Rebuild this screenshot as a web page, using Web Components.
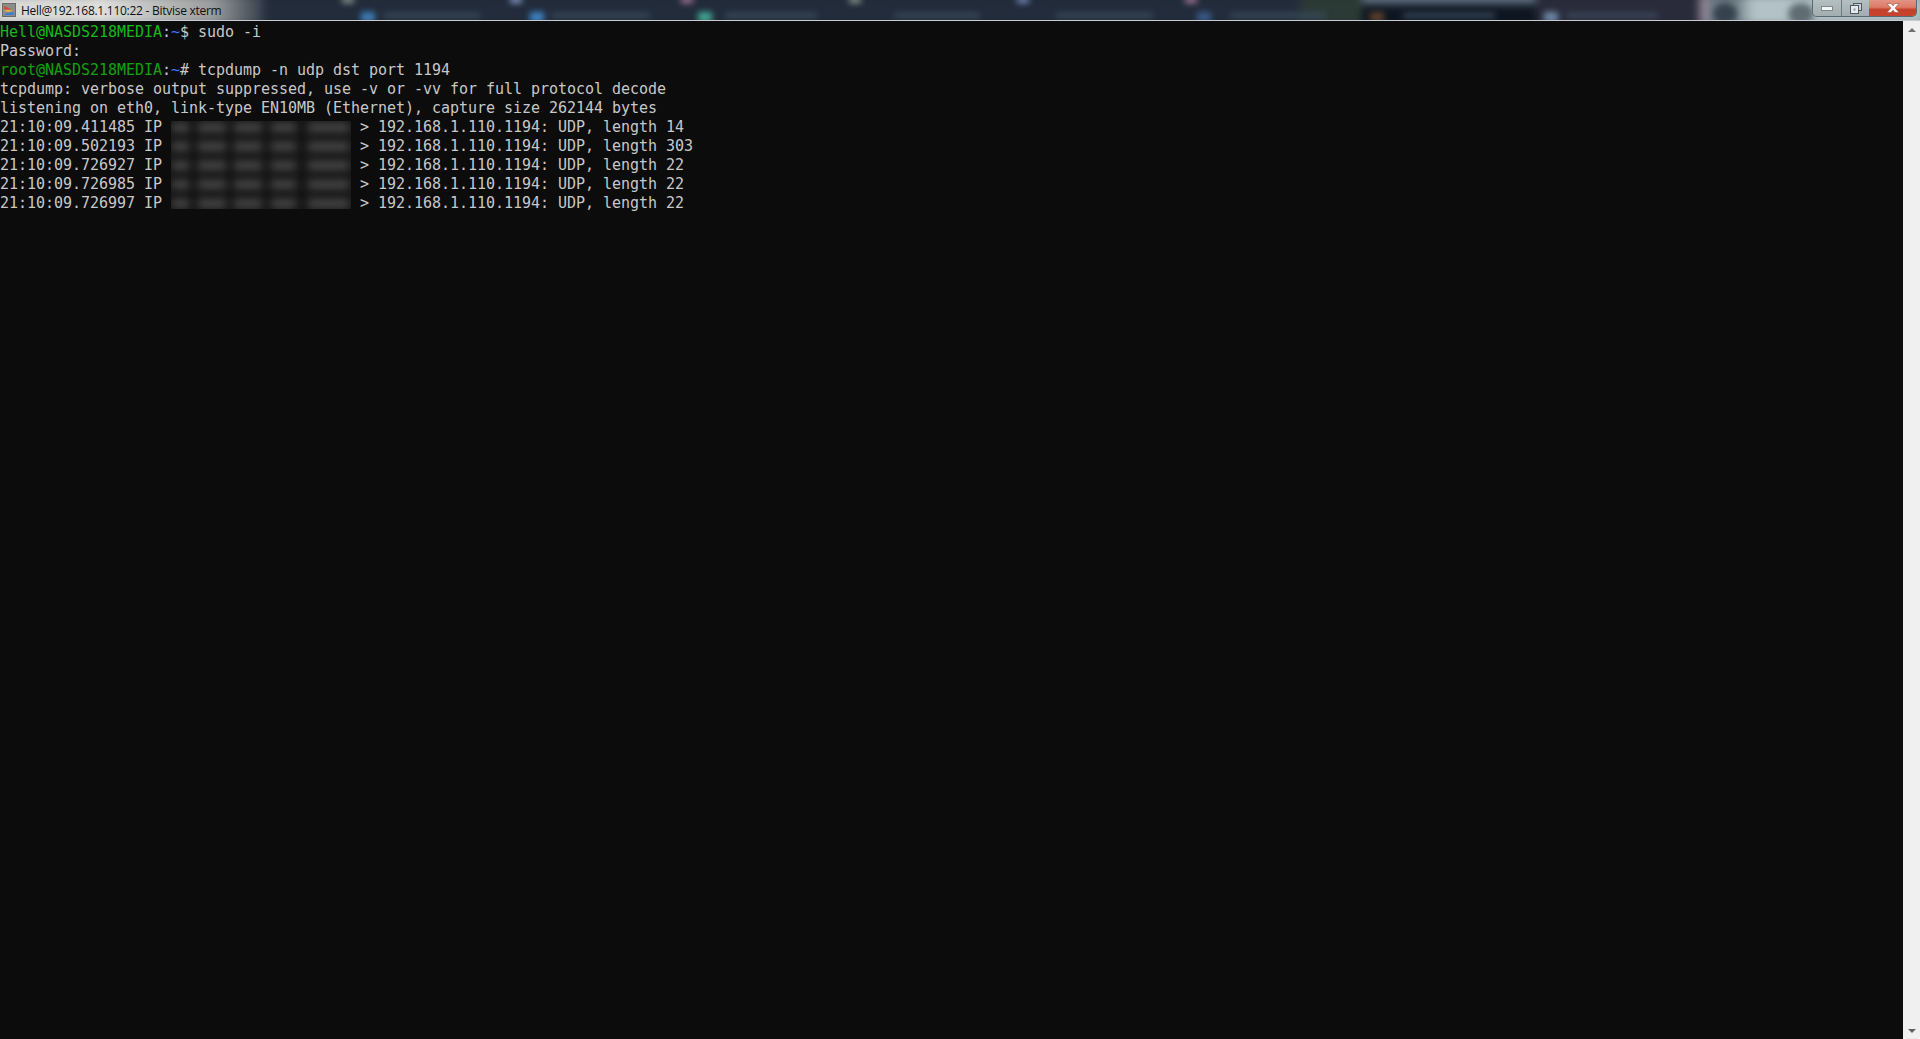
<!DOCTYPE html>
<html>
<head>
<meta charset="utf-8">
<title>Bitvise xterm</title>
<style>
    html, body { margin: 0; height: 100%; background: #0c0c0c; overflow: hidden; }
    body { display: flex; flex-direction: column; }
</style>
</head>
<body>
<xterm-window>
    <term-line><c-user>Hell@NASDS218MEDIA</c-user><c-plain>:</c-plain><c-path>~</c-path><c-plain>$ sudo -i</c-plain></term-line>
    <term-line>Password:</term-line>
    <term-line><c-root>root@NASDS218MEDIA</c-root><c-plain>:</c-plain><c-path>~</c-path><c-plain># tcpdump -n udp dst port 1194</c-plain></term-line>
    <term-line>tcpdump: verbose output suppressed, use -v or -vv for full protocol decode</term-line>
    <term-line>listening on eth0, link-type EN10MB (Ethernet), capture size 262144 bytes</term-line>
    <packet-block>
        <term-line>21:10:09.411485 IP <ip-gap></ip-gap> &gt; 192.168.1.110.1194: UDP, length 14</term-line>
        <term-line>21:10:09.502193 IP <ip-gap></ip-gap> &gt; 192.168.1.110.1194: UDP, length 303</term-line>
        <term-line>21:10:09.726927 IP <ip-gap></ip-gap> &gt; 192.168.1.110.1194: UDP, length 22</term-line>
        <term-line>21:10:09.726985 IP <ip-gap></ip-gap> &gt; 192.168.1.110.1194: UDP, length 22</term-line>
        <term-line>21:10:09.726997 IP <ip-gap></ip-gap> &gt; 192.168.1.110.1194: UDP, length 22</term-line>
    </packet-block>
</xterm-window>

<script>
    class XtermWindow extends HTMLElement {
        constructor() {
            super();
            this.attachShadow({ mode: 'open' });
            this.shadowRoot.innerHTML = `
            <style>
                :host { display: flex; flex-direction: column; flex: 1; min-height: 0; }
                .body { flex: 1; display: flex; min-height: 0; }
                .screen { flex: 1; background: #0c0c0c; color: #c8c8c8; padding-top: 2px; font-family: 'DejaVu Sans Mono', monospace; font-size: 15px; letter-spacing: -0.03px; line-height: 19px; }
            </style>
            <title-bar></title-bar>
            <div class="body">
                <div class="screen"><slot></slot></div>
                <scroll-bar></scroll-bar>
            </div>`;
        }
    }

    // the blurred desktop behind the glass title bar: [left, width, colour] in px
    const TAB_ICONS = [[368, '#3f7fb8'], [537, '#3f86c8'], [705, '#43a890'], [1204, '#3a5a88'], [1377, '#5d3f2c'], [1551, '#6f8ba8']];
    const TAB_LABELS = [[384, 96], [552, 98], [725, 92], [894, 86], [1056, 97], [1230, 96], [1403, 92], [1566, 92]];
    const TOP_GLOWS = [[348, '#8a9a8c'], [516, '#8a9ac8'], [687, '#a87a9a'], [855, '#8a9a8c'], [1023, '#7a8ac0'], [1191, '#a87a9a']];

    class TitleBar extends HTMLElement {
        constructor() {
            super();
            this.attachShadow({ mode: 'open' });
            const icons = TAB_ICONS.map(([x, c]) => `<div class="spot" style="left:${x - 7}px;top:12px;width:14px;height:10px;background:${c}"></div>`).join('');
            const labels = TAB_LABELS.map(([x, w]) => `<div class="spot" style="left:${x}px;top:13px;width:${w}px;height:5px;background:#3a4a5c"></div>`).join('');
            const glows = TOP_GLOWS.map(([x, c]) => `<div class="spot" style="left:${x - 6}px;top:-3px;width:12px;height:6px;background:${c}"></div>`).join('');
            this.shadowRoot.innerHTML = `
            <style>
                :host { display: flex; height: 20px; flex: none; position: relative; overflow: hidden; border-bottom: 1px solid #c6ccd2; background: #1d2733; }
                .glass { position: absolute; inset: -6px; filter: blur(4px); display: flex; }
                .seg { height: 100%; }
                .spot { position: absolute; }
                .caption { position: relative; display: flex; align-items: center; gap: 5px; padding-left: 2px; height: 100%; }
                .text { font: 12px/20px 'Open Sans', sans-serif; letter-spacing: -0.27px; color: #111; white-space: nowrap; position: relative; top: 1px; }
                svg { display: block; }
                .buttons { position: absolute; top: 0; right: 3px; height: 17px; display: flex; border: 1px solid #5b6870; border-top: none; border-radius: 0 0 5px 5px; overflow: hidden; box-sizing: border-box; }
                .btn { display: flex; align-items: center; justify-content: center; border-left: 1px solid #6d7a82; background: linear-gradient(#b4bfc1, #a2adb0); }
                .btn:first-child { border-left: none; }
                .close { border-left: none; background: linear-gradient(#e39384 0%, #dd7a68 45%, #c4402a 60%, #c9442e 100%); }
            </style>
            <div class="glass">
                <div class="seg" style="width:100px;background:#d9d9d6"></div>
                <div class="seg" style="width:170px;background:linear-gradient(90deg,#e2e3e0,#9a9c9d 70%,#343e4a)"></div>
                <div class="seg" style="width:1036px;background:#222c3b"></div>
                <div class="seg" style="width:62px;background:#2c3a36"></div>
                <div class="seg" style="width:174px;background:linear-gradient(#75859a 0 18%,#0d1620 38%)"></div>
                <div class="seg" style="width:163px;background:#2a2b3a"></div>
                <div class="seg" style="width:10px;background:#8d8494"></div>
                <div class="seg" style="flex:1;background:linear-gradient(90deg,#6e7c84 0,#6e7c84 26px,#b2c2c6 44px)"></div>
            </div>
            <div class="glass" style="inset:0;filter:blur(3px)">
                ${icons}${labels}${glows}
                <div class="spot" style="left:1713px;top:3px;width:24px;height:22px;border-radius:50%;background:#36424e"></div>
                <div class="spot" style="left:1788px;top:3px;width:26px;height:22px;border-radius:50%;background:#5f6c72"></div>
            </div>
            <div class="caption">
                <svg width="14" height="14" viewBox="0 0 14 14">
                    <rect x="0.5" y="0.5" width="13" height="13" fill="#8c8c8c" stroke="#6a6a6a"/>
                    <path d="M2 3 L10 6.5 L2 6.5 Z" fill="#d9482e"/>
                    <path d="M2 7 L11 7 L6 9.5 Z" fill="#e8b23a"/>
                    <path d="M2 12 L12 12 L12 9.5 L5 9.5 Z" fill="#3f7fd0"/>
                </svg>
                <span class="text">Hell@192.168.1.110:22 - Bitvise xterm</span>
            </div>
            <div class="buttons">
                <div class="btn" style="width:28px">
                    <svg width="12" height="5" viewBox="0 0 12 5"><rect x="0.5" y="0.5" width="11" height="4" fill="#f1f4f4" stroke="#7d878c"/></svg>
                </div>
                <div class="btn" style="width:27px">
                    <svg width="12" height="11" viewBox="0 0 12 11"><rect x="3.5" y="0.5" width="8" height="7" fill="#c9d0d2" stroke="#4f5a60"/><rect x="0.5" y="2.5" width="8" height="8" fill="#e6eaea" stroke="#4f5a60"/><rect x="3.5" y="5.5" width="2" height="2" fill="#8b959a"/></svg>
                </div>
                <div class="btn close" style="flex:none;width:47px">
                    <svg width="14" height="10" viewBox="0 0 14 10"><path d="M1 0.5 H5 L7 2.8 L9 0.5 H13 L9 5 L13 9.5 H9 L7 7.2 L5 9.5 H1 L5 5 Z" fill="#fff" stroke="#a8503f" stroke-width="0.6"/></svg>
                </div>
            </div>`;
        }
    }

    class ScrollBar extends HTMLElement {
        constructor() {
            super();
            this.attachShadow({ mode: 'open' });
            this.shadowRoot.innerHTML = `
            <style>
                :host { display: flex; flex-direction: column; justify-content: space-between; width: 17px; flex: none; background: #f0f0f0; }
                .arrow { height: 17px; display: flex; align-items: center; justify-content: center; }
                .arrow i { width: 0; height: 0; border-left: 4px solid transparent; border-right: 4px solid transparent; }
                .up i { border-bottom: 4px solid #707070; }
                .down i { border-top: 4px solid #606060; }
            </style>
            <div class="arrow up"><i></i></div>
            <div class="arrow down"><i></i></div>`;
        }
    }

    // no whitespace in this shadow root: white-space: pre would print it
    class TermLine extends HTMLElement {
        constructor() {
            super();
            this.attachShadow({ mode: 'open' });
            this.shadowRoot.innerHTML = `<style>:host { display: block; height: 19px; white-space: pre; }</style><slot></slot>`;
        }
    }

    // coloured runs of the prompt
    function defineRun(tag, color) {
        customElements.define(tag, class extends HTMLElement {
            constructor() {
                super();
                this.attachShadow({ mode: 'open' });
                this.shadowRoot.innerHTML = `<style>:host { display: inline; color: ${color}; }</style><slot></slot>`;
            }
        });
    }

    class IpGap extends HTMLElement {
        constructor() {
            super();
            this.attachShadow({ mode: 'open' });
            this.shadowRoot.innerHTML = `<style>:host { display: inline-block; width: 180px; height: 19px; vertical-align: top; }</style>`;
        }
    }

    // blurred address column that lies over the packet lines
    class PacketBlock extends HTMLElement {
        constructor() {
            super();
            this.attachShadow({ mode: 'open' });
            const chunks = [[1, 17], [27, 28], [63, 28], [100, 25], [137, 41]];
            const row = `<div class="row">${chunks.map(([x, w]) => `<b style="left:${x}px;width:${w}px"></b>`).join('')}</div>`;
            this.shadowRoot.innerHTML = `
            <style>
                :host { display: block; position: relative; }
                .mask { position: absolute; left: 171px; top: 3px; width: 180px; height: 88px; background: #161616; overflow: hidden; display: flex; flex-direction: column; }
                .row { position: relative; height: 19px; flex: none; }
                b { position: absolute; top: 2px; height: 9px; background: #484848; filter: blur(4px); }
            </style>
            <slot></slot>
            <div class="mask">${row.repeat(5)}</div>`;
        }
    }

    defineRun('c-user', '#17b81a');
    defineRun('c-root', '#13a10e');
    defineRun('c-path', '#3b78ff');
    defineRun('c-plain', '#c8c8c8');
    customElements.define('term-line', TermLine);
    customElements.define('ip-gap', IpGap);
    customElements.define('packet-block', PacketBlock);
    customElements.define('title-bar', TitleBar);
    customElements.define('scroll-bar', ScrollBar);
    customElements.define('xterm-window', XtermWindow);
</script>
</body>
</html>
